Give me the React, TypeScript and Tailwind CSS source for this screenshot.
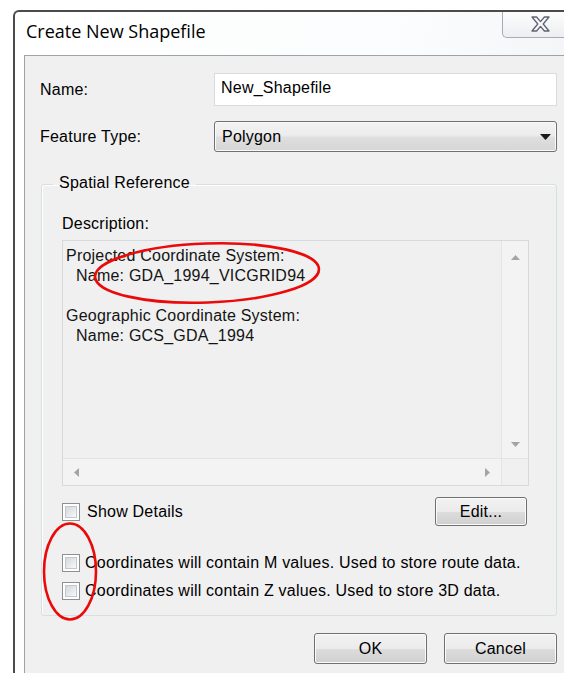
import React from "react";

function CheckBox() {
  return (
    <span className="flex h-[18px] w-[18px] shrink-0 items-center justify-center border border-[#8e8f8f] bg-white">
      <span className="h-[12px] w-[12px] border border-[#c3c7cc] bg-linear-to-br from-[#d4d8dc] to-[#f7f8f9]" />
    </span>
  );
}

function PushButton({ label, className }: { label: string; className: string }) {
  return (
    <button
      type="button"
      className={
        "rounded-[3px] border border-[#707070] bg-[linear-gradient(#f2f2f2_0%,#ebebeb_50%,#dddddd_51%,#cfcfcf_100%)] text-[16px] leading-none tracking-[0.22px] text-black shadow-[inset_0_0_0_1px_#fbfbfb] " +
        className
      }
    >
      {label}
    </button>
  );
}

function Tri({ dir }: { dir: "up" | "down" | "left" | "right" }) {
  const horizontal = dir === "left" || dir === "right";
  const d =
    dir === "up"
      ? "M0 5L4.5 0L9 5Z"
      : dir === "down"
      ? "M0 0H9L4.5 5Z"
      : dir === "left"
      ? "M5 0V9L0 4.5Z"
      : "M0 0V9L5 4.5Z";
  return (
    <svg width={horizontal ? 5 : 9} height={horizontal ? 9 : 5} viewBox={horizontal ? "0 0 5 9" : "0 0 9 5"}>
      <path d={d} fill="#a4a4a4" />
    </svg>
  );
}

export default function App() {
  return (
    <div className="relative h-[673px] w-[564px] overflow-hidden bg-white font-['Liberation_Sans',Arial,sans-serif] text-[16px] tracking-[0.22px] text-black">
      {/* dialog window */}
      <div className="ml-[13px] mt-[10px] flex h-[663px] w-[551px] flex-col rounded-tl-[6px] border-l-2 border-t-2 border-[#4b4b4b] bg-[linear-gradient(100deg,#ffffff_0%,#fbfcfd_60%,#eef1f4_100%)]">
        {/* title bar */}
        <div className="flex h-[43px] shrink-0">
          <div className="pl-[11px] pt-[7px] font-['Open_Sans',sans-serif] text-[18px] leading-[24px] tracking-normal text-black">
            Create New Shapefile
          </div>
          <div className="ml-auto flex h-[26px] w-[62px] items-start rounded-bl-[5px] border-b border-l border-[#a7acb3] bg-linear-to-b from-[#fdfdfd] to-[#eceef1] pl-[28px] pt-[4px]">
            <svg width="19" height="16" viewBox="0 0 19 16">
              <path
                d="M1 1H5.6L9.5 5.6L13.4 1H18L12.2 8L18 15H13.4L9.5 10.4L5.6 15H1L6.8 8Z"
                fill="#f7f8fa"
                stroke="#5d6470"
                strokeWidth="1.3"
                strokeLinejoin="round"
              />
            </svg>
          </div>
        </div>

        {/* client area */}
        <div className="ml-[9px] flex-1 border-l border-t border-[#9da3aa] bg-[#f0f0f0]">
          <div className="flex w-[532px] flex-col pt-[17px]">
            <div className="flex items-center pl-[15px]">
              <span className="w-[174px]">Name:</span>
              <div className="flex h-[33px] w-[343px] items-center border border-[#d8dce2] bg-white pb-[3px] pl-[6px]">
                New_Shapefile
              </div>
            </div>

            <div className="mt-[15px] flex items-center pl-[15px]">
              <span className="w-[174px]">Feature Type:</span>
              <div className="flex h-[31px] w-[343px] items-center justify-between rounded-[3px] border border-[#707070] bg-[linear-gradient(#f3f3f3_0%,#ececec_45%,#dedede_55%,#d6d6d6_100%)] pl-[7px] pr-[5px] shadow-[inset_0_0_0_1px_#fafafa]">
                <span>Polygon</span>
                <svg width="11" height="6" viewBox="0 0 11 6">
                  <path d="M0 0H11L5.5 6Z" fill="#1b1b1b" />
                </svg>
              </div>
            </div>

            <fieldset className="ml-[16px] mt-[20px] w-[516px] rounded-[3px] border border-[#d5dfe5] pb-[14px] pl-[20px] pt-[18px] shadow-[inset_1px_1px_0_#ffffff]">
              <legend className="-ml-[9px] px-[6px] pb-[3px] pt-[1px] leading-[20px]">Spatial Reference</legend>

              <div className="leading-[20px]">Description:</div>

              <div className="mt-[6px] flex h-[246px] w-[467px] flex-col border border-[#d6dadf] bg-[#f0f0f0]">
                <div className="flex min-h-0 flex-1">
                  <div className="flex-1 pl-[3px] pt-[5px] leading-[20px] text-[#141414]">
                    <div>Projected Coordinate System:</div>
                    <div className="pl-[10px]">Name: GDA_1994_VICGRID94</div>
                    <div className="h-[20px]" />
                    <div>Geographic Coordinate System:</div>
                    <div className="pl-[10px]">Name: GCS_GDA_1994</div>
                  </div>
                  <div className="flex w-[27px] flex-col items-center justify-between border-l border-[#e4e4e4] bg-[#f3f3f3] pb-[11px] pt-[14px]">
                    <Tri dir="up" />
                    <Tri dir="down" />
                  </div>
                </div>
                <div className="flex h-[27px] shrink-0 border-t border-[#e4e4e4]">
                  <div className="flex flex-1 items-center justify-between bg-[#f3f3f3] px-[11px]">
                    <Tri dir="left" />
                    <Tri dir="right" />
                  </div>
                  <div className="w-[27px] border-l border-[#e4e4e4]" />
                </div>
              </div>

              <div className="mt-[11px] flex w-[467px] items-center justify-between pr-[2px]">
                <label className="flex items-center gap-[7px]">
                  <CheckBox />
                  <span>Show Details</span>
                </label>
                <PushButton label="Edit..." className="h-[29px] w-[92px]" />
              </div>

              <label className="mt-[27px] flex h-[20px] items-center gap-[5px]">
                <CheckBox />
                <span>Coordinates will contain M values. Used to store route data.</span>
              </label>
              <label className="mt-[8px] flex h-[20px] items-center gap-[5px]">
                <CheckBox />
                <span>Coordinates will contain Z values. Used to store 3D data.</span>
              </label>
            </fieldset>

            <div className="mt-[17px] flex justify-end gap-[17px]">
              <PushButton label="OK" className="h-[31px] w-[113px]" />
              <PushButton label="Cancel" className="h-[31px] w-[113px]" />
            </div>
          </div>
        </div>
      </div>

      {/* red annotation rings */}
      <svg className="pointer-events-none absolute left-0 top-0" width="564" height="673" viewBox="0 0 564 673">
        <ellipse cx="207" cy="273" rx="112" ry="29.5" transform="rotate(-2 207 273)" fill="none" stroke="#ea0a0a" strokeWidth="2.6" />
        <ellipse cx="70" cy="571.5" rx="26" ry="48" fill="none" stroke="#ea0a0a" strokeWidth="2.6" />
      </svg>
    </div>
  );
}
